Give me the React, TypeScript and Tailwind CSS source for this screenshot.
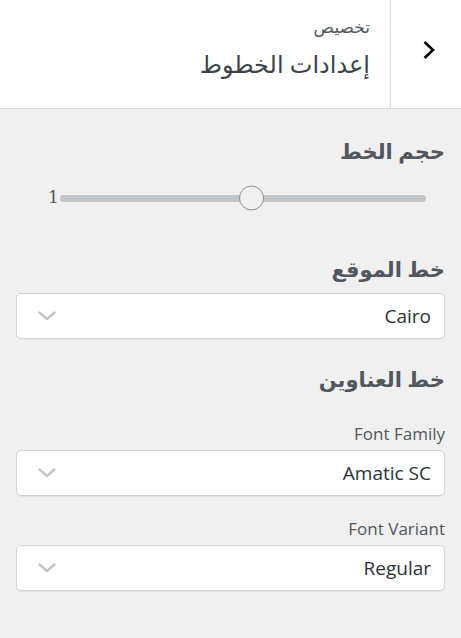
import React from "react";

const font = { fontFamily: '"Open Sans", "DejaVu Sans", sans-serif' };

function SelectChevron() {
  return (
    <svg width="18" height="10" viewBox="0 0 18 10" className="shrink-0">
      <polyline
        points="1.5,1.5 9,8 16.5,1.5"
        fill="none"
        stroke="#c3c4c7"
        strokeWidth="2.4"
        strokeLinecap="round"
        strokeLinejoin="round"
      />
    </svg>
  );
}

function FakeSelect({ value }: { value: string }) {
  return (
    <div
      dir="ltr"
      className="h-[46px] w-full bg-white border border-[#d2d3d6] rounded-[5px] flex items-center justify-between pl-[21px] pr-[13px] shadow-[0_1px_0_#e4e4e6]"
    >
      <SelectChevron />
      <span className="text-[19px] text-[#2c3338]">{value}</span>
    </div>
  );
}

export default function App() {
  return (
    <div
      className="w-[461px] h-[638px] bg-[#f0f0f1] flex flex-col overflow-hidden"
      style={font}
    >
      {/* header */}
      <div className="h-[109px] bg-white border-b border-[#dcdcde] flex shrink-0">
        <div
          dir="rtl"
          className="flex-1 flex flex-col items-start pr-[20px] pt-[15px]"
        >
          <span className="text-[17px] leading-[24px] text-[#50575e]">تخصيص</span>
          <span className="text-[24px] leading-[34px] mt-[8px] text-[#3c434a]">
            إعدادات الخطوط
          </span>
        </div>
        <div className="w-[71px] border-l border-[#dcdcde] flex items-center justify-center pl-[5px] pb-[8px]">
          <svg width="14" height="20" viewBox="0 0 14 20">
            <polyline
              points="2.5,2 11,10 2.5,18"
              fill="none"
              stroke="#000"
              strokeWidth="2.6"
            />
          </svg>
        </div>
      </div>

      {/* body */}
      <div dir="rtl" className="flex flex-col px-[16px] pt-[28px]">
        <h3 className="text-[21px] leading-[28px] font-bold text-[#50575e]">حجم الخط</h3>

        <div dir="ltr" className="mt-[20px] h-[26px] flex items-center pl-[32px] pr-[19px]">
          <span
            className="text-[17px] text-[#50575e] leading-none mb-[2px]"
            style={{ fontFamily: '"DejaVu Serif", serif' }}
          >
            1
          </span>
          <div className="relative flex-1 h-[7px] rounded-full bg-[#bfc5c8] ml-[1px]">
            <div className="absolute left-[179px] top-1/2 -translate-y-1/2 w-[25px] h-[25px] rounded-full bg-[#f0f0f1] border border-[#8c8f94]" />
          </div>
        </div>

        <h3 className="mt-[44px] text-[21px] leading-[28px] font-bold text-[#50575e]">
          خط الموقع
        </h3>
        <div className="mt-[10px]">
          <FakeSelect value="Cairo" />
        </div>

        <h3 className="mt-[26px] text-[21px] leading-[28px] font-bold text-[#50575e]">
          خط العناوين
        </h3>

        <span className="mt-[30px] text-[17px] leading-[22px] text-[#50575e]">Font Family</span>
        <div className="mt-[5px]">
          <FakeSelect value="Amatic SC" />
        </div>

        <span className="mt-[22px] text-[17px] leading-[22px] text-[#50575e]">Font Variant</span>
        <div className="mt-[5px]">
          <FakeSelect value="Regular" />
        </div>
      </div>
    </div>
  );
}
